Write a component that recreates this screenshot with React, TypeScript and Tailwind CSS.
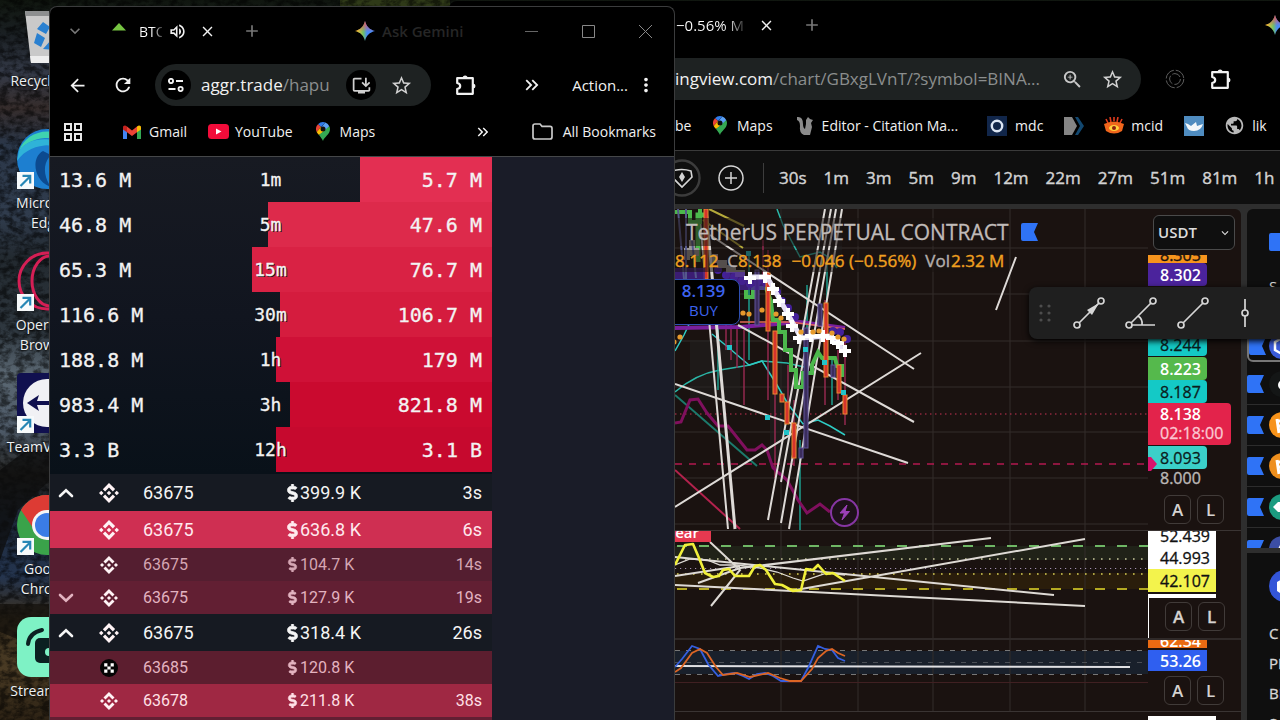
import React from "react";
import {
  MdArrowBack,
  MdRefresh,
  MdStarBorder,
  MdClose,
  MdAdd,
  MdOutlineVolumeUp,
  MdKeyboardArrowDown,
  MdOutlineInstallDesktop,
  MdMoreVert,
  MdZoomIn,
  MdKeyboardDoubleArrowRight,
  MdPublic,
} from "react-icons/md";
import { SiBinance } from "react-icons/si";
import { FaDollarSign } from "react-icons/fa";

/* ---------- small drawings ---------- */

const Spark = ({ id }: { id: string }) => (
  <svg viewBox="0 0 20 20" className="h-5 w-5 shrink-0">
    <defs>
      <linearGradient id={id + "h"} x1="0" y1="0" x2="1" y2="0">
        <stop offset="0.1" stopColor="#f5c532" />
        <stop offset="0.42" stopColor="#6fbf6a" />
        <stop offset="0.6" stopColor="#4a8cf7" />
        <stop offset="1" stopColor="#4a8cf7" />
      </linearGradient>
      <linearGradient id={id + "v"} x1="0" y1="0" x2="0" y2="1">
        <stop offset="0" stopColor="#ee4d5d" />
        <stop offset="0.55" stopColor="#ee4d5d" stopOpacity="0" />
      </linearGradient>
    </defs>
    <path d="M10 0C11.4 5.4 14.6 8.6 20 10C14.6 11.4 11.4 14.6 10 20C8.6 14.6 5.4 11.4 0 10C5.4 8.6 8.6 5.4 10 0Z" fill={`url(#${id}h)`} />
    <path d="M10 0C11.4 5.4 14.6 8.6 20 10C14.6 11.4 11.4 14.6 10 20C8.6 14.6 5.4 11.4 0 10C5.4 8.6 8.6 5.4 10 0Z" fill={`url(#${id}v)`} />
  </svg>
);

const Puzzle = () => (
  <svg viewBox="0 0 22 22" className="h-[22px] w-[22px]" fill="none" stroke="#f1f1f1" strokeWidth="2.2" strokeLinejoin="round">
    <path d="M2.2 4.2H17.8V19.8H2.2V15C4.4 14.6 5.2 13.4 5.2 12C5.2 10.6 4.4 9.4 2.2 9Z" />
    <path d="M7.6 4.2a2.5 2.6 0 0 1 5 0ZM17.8 9.4a2.6 2.5 0 0 1 0 5Z" fill="#f1f1f1" stroke="none" />
  </svg>
);

const Pin = () => (
  <svg viewBox="0 0 14 19" className="h-[19px] w-[14px] shrink-0">
    <path d="M7 0A7 7 0 0 0 2 2.2L5 5L9.5 .6A7 7 0 0 0 7 0Z" fill="#2f7bea" />
    <path d="M2 2.2A7 7 0 0 0 .7 10L5 5Z" fill="#ea4335" />
    <path d="M9.5 .6L5 5.5L9 9L13.3 4.2A7 7 0 0 0 9.5 .6Z" fill="#5aa0f5" />
    <path d="M.7 10C1.2 11 2 12 3 13L9 9L5 5Z" fill="#fbbc04" />
    <path d="M13.3 4.2L3 13C5 15.4 6 17 7 19C8 15 14 12.5 14 7A7 7 0 0 0 13.3 4.2Z" fill="#34a853" />
    <circle cx="7" cy="7" r="2.5" fill="#101010" />
  </svg>
);

const Gmail = () => (
  <svg viewBox="0 0 18 14" className="h-[14px] w-[18px] shrink-0">
    <path d="M0 3V14H4V5.5Z" fill="#4285f4" />
    <path d="M18 3V14H14V5.5Z" fill="#34a853" />
    <path d="M4 1.6V7.2L9 11L14 7.2V1.6L9 5.4Z" fill="#ea4335" />
    <path d="M0 2.4C0 .3 2.2-.2 4 1.4V7.2L0 4.4Z" fill="#c5221f" />
    <path d="M18 2.4C18 .3 15.8-.2 14 1.4V7.2L18 4.4Z" fill="#fbbc04" />
  </svg>
);

const Flag = () => (
  <svg viewBox="0 0 17 18" className="h-[18px] w-[17px] shrink-0">
    <path d="M0 2Q0 0 2 0H17L13 9L17 18H2Q0 18 0 16Z" fill="#2f73f6" />
  </svg>
);

const Shortcut = () => (
  <svg viewBox="0 0 17 17" className="absolute bottom-0 left-0 h-[17px] w-[17px]">
    <rect width="17" height="17" fill="#f7fafb" />
    <path d="M3.5 14L12.5 5M5.5 3.8H13.2V11.5" fill="none" stroke="#2686b5" strokeWidth="2.2" />
  </svg>
);

/* ---------- desktop ---------- */

const desktopIcons: { label: string; art: React.ReactNode; shortcut?: boolean }[] = [
  {
    label: "Recycle Bin",
    art: (
      <>
        <path d="M8 4H54L49 56H14Z" fill="#c9c9c9" />
        <path d="M8 4H54L52 9H9Z" fill="#8d8f90" />
        <path d="M13 49H50L49 56H14Z" fill="#ededed" />
        <path d="M20 22L26 15L33 20L29 27ZM17 36L20 26L28 31L24 40ZM26 42L34 33L40 43Z" fill="#2a80d0" />
      </>
    ),
  },
  {
    label: "Microsoft Edge",
    shortcut: true,
    art: (
      <>
        <circle cx="30" cy="30" r="30" fill="#1d7fd0" />
        <path d="M2 22C8 2 38-6 54 14C40 6 14 6 2 22Z" fill="#3fd3b0" />
        <path d="M2 22C12 6 40 8 52 18C36 14 12 14 0 32Z" fill="#2fb3d8" />
        <path d="M26 22C14 28 16 52 34 58C28 50 24 36 34 26Z" fill="#0c4a90" />
      </>
    ),
  },
  {
    label: "Opera GX Browser",
    shortcut: true,
    art: (
      <g fill="none" stroke="#d51f55" strokeWidth="3">
        <circle cx="30" cy="30" r="28" />
        <ellipse cx="33" cy="30" rx="18" ry="25" />
      </g>
    ),
  },
  {
    label: "TeamViewer",
    shortcut: true,
    art: (
      <>
        <rect width="60" height="60" rx="4" fill="#10104f" />
        <circle cx="30" cy="30" r="24" fill="#f1f1f4" />
        <path d="M10 30L22 22L20 28H40V32H20L22 38Z" fill="#10104f" />
      </>
    ),
  },
  {
    label: "Google Chrome",
    shortcut: true,
    art: (
      <>
        <circle cx="30" cy="30" r="30" fill="#3aa34a" />
        <path d="M4 15A30 30 0 0 1 56 15H30L18 36Z" fill="#dd3b34" />
        <circle cx="30" cy="30" r="15" fill="#f5f5f5" />
        <circle cx="30" cy="30" r="12" fill="#3a7ce6" />
      </>
    ),
  },
  {
    label: "Streamlabs",
    art: (
      <>
        <rect width="60" height="60" rx="14" fill="#7ef2c5" />
        <rect x="18" y="21" width="34" height="25" rx="5" fill="#0b2021" />
        <path d="M11 27Q12 16 25 13" fill="none" stroke="#0b2021" strokeWidth="4" strokeLinecap="round" />
        <circle cx="32" cy="35" r="4" fill="#7ef2c5" />
      </>
    ),
  },
];

const Wallpaper = () => (
  <svg viewBox="0 0 1280 720" preserveAspectRatio="xMinYMin slice" className="absolute inset-0 h-full w-full">
    <defs>
      <linearGradient id="rock" x1="0" y1="0" x2="0" y2="1">
        <stop offset="0" stopColor="#10160f" />
        <stop offset="0.05" stopColor="#1b2024" />
        <stop offset="0.1" stopColor="#343a48" />
        <stop offset="0.15" stopColor="#352c2b" />
        <stop offset="0.2" stopColor="#2b3749" />
        <stop offset="0.3" stopColor="#303c4d" />
        <stop offset="0.36" stopColor="#22292f" />
        <stop offset="0.46" stopColor="#2f3840" />
        <stop offset="0.52" stopColor="#5b6873" />
        <stop offset="0.6" stopColor="#4c5866" />
        <stop offset="0.66" stopColor="#23221f" />
        <stop offset="0.72" stopColor="#1e2a3c" />
        <stop offset="0.8" stopColor="#24344e" />
        <stop offset="0.86" stopColor="#3a2f1e" />
        <stop offset="0.93" stopColor="#4a3b24" />
        <stop offset="1" stopColor="#2c2214" />
      </linearGradient>
      <filter id="grain" x="0" y="0" width="1" height="1">
        <feTurbulence type="fractalNoise" baseFrequency="0.12 0.18" numOctaves="4" seed="7" />
        <feColorMatrix values="0 0 0 0 0  0 0 0 0 0  0 0 0 0 0  0 3 0 0 -1.1" />
      </filter>
    </defs>
    <rect width="1280" height="720" fill="url(#rock)" />
    <path d="M340 0H450V8H340Z" fill="#2f3a18" />
    <rect width="460" height="720" filter="url(#grain)" opacity="0.55" />
    <path d="M0 470L24 452L50 448V480L18 510L0 560Z" fill="#0e0e0e" opacity="0.75" />
    <path d="M0 604H50V618L20 640L0 632Z" fill="#12100c" opacity="0.7" />
  </svg>
);

/* ---------- order flow window ---------- */

const ratios = [
  { buy: "13.6 M", span: "1m", sell: "5.7 M", pct: 29.9, color: "#e32f52" },
  { buy: "46.8 M", span: "5m", sell: "47.6 M", pct: 50.7, color: "#dd2a4b" },
  { buy: "65.3 M", span: "15m", sell: "76.7 M", pct: 54.3, color: "#d92244" },
  { buy: "116.6 M", span: "30m", sell: "106.7 M", pct: 48, color: "#d51c3e" },
  { buy: "188.8 M", span: "1h", sell: "179 M", pct: 48.9, color: "#cf1137" },
  { buy: "983.4 M", span: "3h", sell: "821.8 M", pct: 45.7, color: "#ca0a2f" },
  { buy: "3.3 B", span: "12h", sell: "3.1 B", pct: 48.9, color: "#c6092e" },
];

const big = "h-[37px] text-[18px]";
const small = "h-[33px] text-[16px]";
const trades = [
  { c: "up", ex: "b", price: "63675", amt: "399.9 K", age: "3s", row: `${big} bg-[#161a22] text-[#f5f5f5]`, lg: true },
  { c: "", ex: "b", price: "63675", amt: "636.8 K", age: "6s", row: `${big} bg-[#cf2f52] text-[#ffe9ee]`, lg: true },
  { c: "", ex: "b", price: "63675", amt: "104.7 K", age: "14s", row: `${small} bg-[#541e30] text-[#d5a6b3]`, lg: false },
  { c: "down", ex: "b", price: "63675", amt: "127.9 K", age: "19s", row: `${small} bg-[#621f33] text-[#e2b3c0]`, lg: false },
  { c: "up", ex: "b", price: "63675", amt: "318.4 K", age: "26s", row: `${big} bg-[#161a22] text-[#f5f5f5]`, lg: true },
  { c: "", ex: "o", price: "63685", amt: "120.8 K", age: "", row: `${small} bg-[#5c1e2f] text-[#e4b3c0]`, lg: false },
  { c: "", ex: "b", price: "63678", amt: "211.8 K", age: "38s", row: `${small} bg-[#9f2843] text-[#ffe0e7]`, lg: false },
];

const Okx = () => (
  <svg viewBox="0 0 18 18" className="h-[18px] w-[18px]">
    <circle cx="9" cy="9" r="9" fill="#050505" />
    <path d="M4.2 4.2h3.2v3.2H4.2zM10.6 4.2h3.2v3.2h-3.2zM7.4 7.4h3.2v3.2H7.4zM4.2 10.6h3.2v3.2H4.2zM10.6 10.6h3.2v3.2h-3.2z" fill="#fff" />
  </svg>
);

const Caret = ({ d }: { d: string }) => (
  <svg viewBox="0 0 16 10" className="h-[10px] w-4" fill="none" stroke="currentColor" strokeWidth="2.6" strokeLinecap="round">
    <path d={d} />
  </svg>
);

const FlowWindow = () => (
  <section className="absolute bottom-0 left-[49px] top-[6px] flex w-[626px] flex-col overflow-hidden rounded-t-lg border border-b-0 border-[#3b3c3d] bg-black text-[15px] text-[#f1f1f1]">
    <header className="flex h-[50px] shrink-0 items-center pb-[2px] pl-[15px]">
      <button aria-label="Search tabs" className="text-[#777]"><MdKeyboardArrowDown size={20} /></button>
      <svg viewBox="0 0 14 8" className="-mt-2 ml-[27px] h-2 w-[14px]"><path d="M7 0L14 7.5H0Z" fill="#76c442" /></svg>
      <span className="ml-[13px] w-[23px] overflow-hidden bg-gradient-to-r from-white from-60% to-[#444] bg-clip-text text-[14px] text-transparent">BTC</span>
      <button aria-label="Mute tab" className="ml-[6px]"><MdOutlineVolumeUp size={19} /></button>
      <button aria-label="Close tab" className="ml-3"><MdClose size={17} /></button>
      <button aria-label="New tab" className="ml-[26px] text-[#777]"><MdAdd size={20} /></button>
      <button className="ml-[93px] flex items-center gap-[7px] text-[15px] font-semibold text-[#262626]">
        <Spark id="s1" />Ask Gemini
      </button>
      <div className="ml-auto mr-[22px] flex items-center gap-[44px]">
        <button aria-label="Minimize"><svg viewBox="0 0 13 13" className="h-[13px] w-[13px]"><path d="M0 6.5H13" stroke="#666" /></svg></button>
        <button aria-label="Maximize"><svg viewBox="0 0 13 13" className="h-[13px] w-[13px]"><path d="M.5.5H12.5V12.5H.5Z" fill="none" stroke="#888" /></svg></button>
        <button aria-label="Close"><svg viewBox="0 0 13 13" className="h-[13px] w-[13px]"><path d="M0 0L13 13M13 0L0 13" stroke="#888" /></svg></button>
      </div>
    </header>
    <div className="flex h-[56px] shrink-0 items-center pl-[17px]">
      <button aria-label="Back"><MdArrowBack size={21} /></button>
      <button aria-label="Reload" className="ml-6"><MdRefresh size={22} /></button>
      <div className="ml-[21px] flex h-[42px] w-[276px] items-center rounded-full bg-[#1e2222] pl-[6px]">
        <span className="grid h-[30px] w-[30px] place-items-center rounded-full bg-black">
          <svg viewBox="0 0 16 14" className="h-[14px] w-4" fill="none" stroke="#f1f1f1" strokeWidth="1.9">
            <circle cx="3" cy="3" r="2.1" /><path d="M8 3H15" /><circle cx="12.6" cy="11" r="2.1" /><path d="M.5 11H7.5" />
          </svg>
        </span>
        <span className="ml-[10px] w-[145px] text-[17px]">aggr.trade<span className="text-[#8b8e8e]">/hapu</span></span>
        <button aria-label="Install" className="grid h-[30px] w-[30px] place-items-center rounded-full bg-black text-[#cfcfcf]"><MdOutlineInstallDesktop size={21} /></button>
        <button aria-label="Bookmark" className="ml-[14px] text-[#d0d0d0]"><MdStarBorder size={23} /></button>
      </div>
      <button aria-label="Extensions" className="ml-[24px]"><Puzzle /></button>
      <button aria-label="More" className="ml-[44px]"><MdKeyboardDoubleArrowRight size={22} /></button>
      <span className="ml-auto">Action...</span>
      <button aria-label="Menu" className="ml-[7px] mr-[17px]"><MdMoreVert size={22} /></button>
    </div>
    <nav className="flex h-[43px] shrink-0 items-center pb-[6px] pl-[14px] text-[14px]">
      <svg viewBox="0 0 18 18" className="h-[18px] w-[18px]" fill="none" stroke="#e8e8e8" strokeWidth="2">
        <path d="M1 1h6v6H1zM11 1h6v6h-6zM1 11h6v6H1zM11 11h6v6h-6z" />
      </svg>
      <a href="#gmail" className="ml-[41px] flex items-center gap-2"><Gmail />Gmail</a>
      <a href="#youtube" className="ml-[21px] flex items-center gap-[6px]">
        <svg viewBox="0 0 21 15" className="h-[15px] w-[21px]"><rect width="21" height="15" rx="3.5" fill="#f20c3a" /><path d="M8 4.5L13.5 7.5L8 10.5Z" fill="#fff" /></svg>YouTube
      </a>
      <a href="#maps" className="ml-[23px] flex items-center gap-[10px]"><Pin />Maps</a>
      <button aria-label="More bookmarks" className="ml-auto mr-[40px]"><MdKeyboardDoubleArrowRight size={18} /></button>
      <a href="#all" className="mr-[18px] flex items-center gap-[10px]">
        <svg viewBox="0 0 21 17" className="h-[17px] w-[21px]"><path d="M1 3Q1 1 3 1H8L10 3.4H18Q20 3.4 20 5.4V14Q20 16 18 16H3Q1 16 1 14Z" fill="none" stroke="#c9c9c9" strokeWidth="1.7" /></svg>
        All Bookmarks
      </a>
    </nav>
    <div className="flex-1 overflow-hidden border-t border-[#454749] bg-[#1a1c28]">
      <div className="w-[442px]">
        <div className="bg-gradient-to-b from-[#171a22] via-[#11151f] to-[#091119] pb-[2px] font-['DejaVu_Sans_Mono',monospace] text-[20px] text-[#f3f3f3] [-webkit-text-stroke:0.3px]">
          {ratios.map((r) => (
            <div key={r.span} className="relative flex h-[45px] items-center">
              <div className="absolute inset-y-0 right-0" style={{ width: `${r.pct}%`, backgroundColor: r.color }} />
              <span className="relative flex-1 pl-[9px]">{r.buy}</span>
              <span className="relative text-[18px] [text-shadow:1px_1px_0_#111]">{r.span}</span>
              <span className="relative flex-1 pr-[10px] text-right">{r.sell}</span>
            </div>
          ))}
        </div>
        <table className="w-full table-fixed border-collapse font-['Roboto',sans-serif]">
          <colgroup><col className="w-[40px]" /><col className="w-[53px]" /><col className="w-[143px]" /><col /><col className="w-[70px]" /></colgroup>
          <tbody>
            {trades.map((t, i) => (
              <tr key={i} className={t.row}>
                <td className="p-0 pl-2">
                  {t.c === "up" && <Caret d="M2 8L8 2.4L14 8" />}
                  {t.c === "down" && <Caret d="M2 2L8 7.6L14 2" />}
                </td>
                <td className="p-0">
                  <div className="grid w-[37px] place-items-center text-[#fff3f5]">
                    {t.ex === "o" ? <Okx /> : <SiBinance size={t.lg ? 20 : 18} />}
                  </div>
                </td>
                <td className="p-0">{t.price}</td>
                <td className="p-0">
                  <span className="flex items-center gap-px"><FaDollarSign size={t.lg ? 18 : 15} className="w-[13px]" strokeWidth={20} stroke="currentColor" />{t.amt}</span>
                </td>
                <td className="p-0 pr-[10px] text-right">{t.age}</td>
              </tr>
            ))}
          </tbody>
        </table>
        <div className="h-10 bg-[#621f33]" />
      </div>
    </div>
  </section>
);

/* ---------- chart window ---------- */

const intervals = ["30s", "1m", "3m", "5m", "9m", "12m", "22m", "27m", "51m", "81m", "1h"];

const gridX = [781, 858, 933, 1010, 1085];

/* candles: x, top, height, rising */
const candles: [number, number, number, boolean][] = [
  [704, 209, 70, false],
  [766, 273, 58, false],
  [773, 331, 63, false],
  [780, 394, 8, false],
  [785, 402, 22, false],
  [792, 423, 35, false],
  [824, 303, 74, false],
  [837, 365, 28, false],
  [843, 395, 19, false],
  [755, 270, 55, true],
  [818, 304, 22, true],
  [804, 328, 120, true],
  [831, 365, 12, true],
  [799, 448, 10, true],
];

const orangeDots = [[674, 342], [680, 337], [743, 313], [749, 314], [762, 310], [776, 314], [781, 318], [801, 332], [813, 332], [819, 331], [832, 333], [838, 337], [844, 339]];
const purpleDots = [[718, 270], [726, 275], [734, 277], [742, 281], [750, 284], [758, 281], [766, 283], [777, 292], [782, 301], [788, 308], [795, 317], [833, 331], [840, 332], [847, 339]];
const crosses = [[750, 278], [765, 277], [773, 289], [779, 301], [788, 314], [792, 326], [799, 338], [811, 336], [823, 336], [832, 338], [838, 343], [845, 351]];

const PricePane = () => (
  <svg viewBox="675 209 473 321" preserveAspectRatio="xMinYMin slice" className="h-full w-full">
    <g stroke="#332c2b">
      {gridX.map((x) => <path key={x} d={`M${x} 209V530`} />)}
      {[248, 294, 341, 387, 432, 478, 524].map((y) => <path key={y} d={`M675 ${y}H1148`} />)}
    </g>
    <path d="M780 209h62v50h-62zM770 300h30v160h-30zM690 340h50v60h-50z" fill="#222" opacity="0.5" />
    <path d="M675 414H1148" stroke="#c73352" strokeDasharray="1.5 3.5" />
    <path d="M675 464H1148" stroke="#b3184f" strokeWidth="1.4" strokeDasharray="7 7" />
    <g fill="none" stroke="#2bb7a8" strokeWidth="1.5">
      <path d="M777 209L783 225L800 257L820 252L830 258L837 268" />
      <path d="M675 392Q696 374 720 370L750 365L762 361L787 363L804 367" />
      <path d="M675 351L684 335L692 318M712 334L729 348L749 365L762 361L777 385L788 404L803 424L818 420L830 426L845 435" stroke="#2ecbc4" />
      <path d="M675 395L757 466" strokeWidth="2" stroke="#1c7a6c" />
      <path d="M749 255V360M807 285V420M832 360V405M800 440V530M718 320V390M827 260V300" stroke="#1d9d8d" />
    </g>
    <path d="M675 470L740 529" stroke="#b3224d" strokeWidth="2" />
    <g stroke="#a52b58" strokeWidth="1.3">
      <path d="M744 330V405M737 325V368M731 325V360M775 390V478M768 250V400M788 365V420M763 240V275M825 300V405M838 350V400M845 340V425M794 400V466M726 320V350" />
    </g>
    <path d="M675 423L681 422L690 400L698 399L707 413L718 426H728L747 450H755L762 445L767 450L773 468L787 480L798 500L807 513L820 504L830 512" fill="none" stroke="#80105e" strokeWidth="3" />
    <path d="M675 328L740 327L800 322L845 328" fill="none" stroke="#7a1f9c" strokeWidth="4" />
    <path d="M740 322H790L845 329" fill="none" stroke="#e06a55" strokeWidth="1.4" />
    <g stroke="#dedad7" strokeWidth="2" fill="none">
      <path d="M825 209L768 520M831 209L781 482M836 209L781 523M842 209L789 529" />
      <path d="M699 209L728 529" /><path d="M706 209L735 529" strokeWidth="3" />
      <path d="M675 384L908 463M675 507L921 353M710 235L760 268L914 369M738 325L914 422M1016 257L996 310" />
    </g>
    <path d="M709 209L744 226M703 220L743 248" stroke="#b5a93a" strokeWidth="2" />
    <g fill="none" stroke="#4cb84c" strokeWidth="4">
      <path d="M675 212H690V222H700V209M746 290V297H753V288H766L771 301L773 320H779V332H785V350H791V370H796V387H803V373H812V365L818 352L822 358H835L837 366H842V377" />
      <path d="M698 262V215H708" strokeWidth="5" />
    </g>
    <g fill="#43209a">{purpleDots.map(([x, y]) => <circle key={x} cx={x} cy={y} r="4" />)}</g>
    {candles.map(([x, y, h, up]) => (
      <rect key={x} x={x} y={y} width="4" height={h} fill={up ? "#3b2d5c" : "#d5342d"} stroke={up ? "#61549a" : "#e98a2f"} strokeWidth="1" />
    ))}
    <path d="M684 248h5v-8h6v8h4v8h-9v4h-6zM712 254h6v6h9v5h9v5h9v7h-10v-4h-9v-5h-9v-5h-5z" fill="#9c9896" />
    <path d="M675 268h30v12h20v-8h20v8h20v10H675z" fill="#43218c" opacity="0.8" />
    <path d="M678 209l6 70M686 209v70M692 240l4 38" stroke="#55588c" strokeWidth="2" />
    <path d="M748 277H767L774 289L801 338L830 336L845 351" fill="none" stroke="#e8e3f6" strokeWidth="5" />
    <g stroke="#fff" strokeWidth="4">
      {crosses.map(([x, y]) => <path key={x} d={`M${x - 6} ${y}h12M${x} ${y - 6}v12`} />)}
    </g>
    <g fill="#e79a2c">{orangeDots.map(([x, y]) => <circle key={x} cx={x} cy={y} r="2.6" />)}</g>
    <g fill="#22c3c9">
      {[[727, 345], [803, 347], [841, 390], [784, 430], [765, 415], [822, 360], [746, 251]].map(([x, y]) => <rect key={x} x={x} y={y} width="5" height="5" />)}
    </g>
    <circle cx="844.5" cy="512.5" r="13.5" fill="#1d1119" stroke="#8636a3" strokeWidth="2" />
    <path d="M847 505L840 513H844.5L842 520L849.5 511.5H845Z" fill="#9b40b8" stroke="#9b40b8" strokeLinejoin="round" />
  </svg>
);

const RsiPane = () => (
  <svg viewBox="675 531 473 107" preserveAspectRatio="xMinYMin slice" className="h-full w-full">
    <rect x="675" y="546" width="473" height="14" fill="#202218" />
    <rect x="675" y="573" width="473" height="16" fill="#2a1d0b" />
    <g stroke="#332c2b">{gridX.map((x) => <path key={x} d={`M${x} 531V638`} />)}</g>
    <path d="M677 546H1148" stroke="#6fb765" strokeWidth="2" strokeDasharray="10 12" />
    <path d="M677 559H1148" stroke="#c8c79a" strokeWidth="1.5" strokeDasharray="1.6 6.4" />
    <path d="M675 568.5H1148" stroke="#a08fb0" strokeDasharray="1.2 3.8" />
    <path d="M677 574H1148" stroke="#d8cf55" strokeWidth="1.6" strokeDasharray="1.6 6.4" />
    <path d="M677 589H1148" stroke="#b5aa22" strokeWidth="2" strokeDasharray="10 12" />
    <g stroke="#dedad5" strokeWidth="2" fill="none">
      <path d="M710 542L740 570L711 606M698 583L740 568L991 538M675 576L740 566M790 591L1085 539M675 557L1054 595M675 585L1085 606" />
      <path d="M675 565L690 559L707 560L720 565H737L760 568L777 572L793 578L803 581L827 573L845 575" strokeWidth="1.3" />
    </g>
    <path d="M675 565L685 545L693 544L699 558L705 573L713 577L719 576L723 570L729 569L735 576H749L755 566L760 565L766 570L775 584L782 585L793 591L801 590L806 569L813 570L818 565L826 574L833 573L845 581" fill="none" stroke="#f0ef3a" strokeWidth="2.6" strokeLinejoin="round" />
  </svg>
);

const StochPane = () => (
  <svg viewBox="675 639 473 71" preserveAspectRatio="xMinYMin slice" className="h-full w-full">
    <rect x="675" y="650" width="473" height="23" fill="#19202b" />
    <g stroke="#332c2b">{gridX.map((x) => <path key={x} d={`M${x} 639V711`} />)}</g>
    <path d="M675 649.5H1148M675 673.5H1148" stroke="#777" strokeDasharray="5 6" />
    <path d="M675 661.5H1148" stroke="#4a4e55" strokeDasharray="5 6" />
    <path d="M675 681.5H1148" stroke="#402022" />
    <path d="M675 665L1130 666" stroke="#dfdfe2" strokeWidth="2" />
    <path d="M675 666L682 658L692 645L700 648L708 663L718 675L727 673L735 672L743 675L749 678L757 673L765 672L773 675L781 680H801L808 667L818 645L825 648L832 649L838 657L845 660" fill="none" stroke="#355fe0" strokeWidth="1.8" />
    <path d="M675 671L681 667L692 652L700 648L707 652L716 666L723 674L737 672L750 676L768 672L780 677L790 680H801L812 668L818 657L826 650L832 648L838 652L845 655" fill="none" stroke="#dc6524" strokeWidth="1.8" />
  </svg>
);

const ScaleButtons = () => (
  <div className="flex gap-[6px] pl-4">
    {["A", "L"].map((s) => (
      <button key={s} className="grid h-[29px] w-[27px] place-items-center rounded-md border border-[#413b39] text-[17px] font-semibold text-[#d5d2d0]">{s}</button>
    ))}
  </div>
);

const tag = "flex shrink-0 items-center rounded-r-sm pl-3 text-[16px] leading-none";

const PriceAxis = () => (
  <div className="flex w-[93px] shrink-0 flex-col">
    <div className="relative ml-[5px] mt-[6px] h-[35px] w-[82px] shrink-0">
      <select aria-label="Currency" className="h-full w-full appearance-none rounded-md border border-[#4a4a4a] bg-[#0f0f0f] pl-1 text-[15px] font-semibold text-[#dcdcdc]">
        <option>USDT</option>
      </select>
      <MdKeyboardArrowDown size={14} className="pointer-events-none absolute right-[3px] top-[11px] text-[#ddd]" />
    </div>
    <div className="mt-[5px] flex h-[8px] w-[59px] shrink-0 items-end overflow-hidden bg-[#f7941d] pl-3 text-[16px] leading-[16px] text-[#1b1210] [-webkit-text-stroke:0.4px]">8.305</div>
    <div className={`${tag} mb-[47px] h-[23px] w-[59px] bg-[#4b239c] font-semibold text-white`}>8.302</div>
    <div className={`${tag} h-[23px] w-[59px] bg-[#14c9c6] text-[#0b1c1c] [-webkit-text-stroke:0.3px]`}>8.244</div>
    <div className={`${tag} mt-px h-[23px] w-[59px] bg-[#55b94c] font-semibold text-white`}>8.223</div>
    <div className={`${tag} h-[23px] w-[59px] bg-[#14c9c6] text-[#0b1c1c] [-webkit-text-stroke:0.3px]`}>8.187</div>
    <div className="flex h-[42px] w-[83px] shrink-0 flex-col justify-center rounded-r-sm bg-[#e3234b] pl-3 text-[16px] leading-[19px]">
      <span className="font-semibold text-white">8.138</span>
      <span className="text-[#fbc9d3] [-webkit-text-stroke:0.3px]">02:18:00</span>
    </div>
    <div className={`${tag} relative mt-px h-[23px] w-[59px] bg-[#3bd0c9] text-[#0b1c1c] [-webkit-text-stroke:0.3px]`}>
      8.093
      <svg viewBox="0 0 9 14" className="absolute left-0 top-[11px] h-[14px] w-[9px]"><path d="M0 0H3L9 7L3 14H0Z" fill="#d9126c" /></svg>
    </div>
    <div className="mb-2 shrink-0 pl-3 text-[16px] leading-[18px] text-[#bbb7b5] [-webkit-text-stroke:0.4px]">8.000</div>
    <ScaleButtons />
  </div>
);

const coins = [
  { color: "#141616", glyph: <circle cx="14" cy="14" r="5" fill="#fff" /> },
  { color: "#f7931a", glyph: <path d="M8 7l2 14M7 9h8M8 14h8" stroke="#fff" strokeWidth="3" /> },
  { color: "#ee8f1d", glyph: <path d="M8 7l2 14M7 9h8M8 14h8" stroke="#fff" strokeWidth="3" /> },
  { color: "#1b9c80", glyph: <path d="M4 13l5-5h10v10H9z" fill="#fff" /> },
];

const Watchlist = () => (
  <aside className="flex w-[33px] shrink-0 flex-col gap-[5px] overflow-hidden text-[16px] text-[#d6d6d6]">
    <div className="h-[339px] shrink-0 overflow-hidden rounded-tl-md bg-[#0f0f0f]">
      <div className="flex h-[66px] items-center pl-[22px]"><Flag /></div>
      <div className="h-[54px] pl-[22px] text-[15px]">S</div>
      <div className="mb-[2px] flex h-[33px] w-[60px] items-center gap-[3px] rounded-md border-2 border-[#777]">
        <Flag /><svg viewBox="0 0 26 26" className="h-[26px] w-[26px]"><circle cx="13" cy="13" r="13" fill="#3b5bd8" /><path d="M13 5l7 4v8l-7 4l-7-4V9z" fill="none" stroke="#fff" strokeWidth="2.5" /></svg>
      </div>
      {coins.map((c, i) => (
        <div key={i} className="flex h-[41px] w-[60px] items-center gap-[5px] border-b border-[#2c2c2c]">
          <Flag /><svg viewBox="0 0 26 26" className="h-[26px] w-[26px]"><circle cx="13" cy="13" r="13" fill={c.color} />{c.glyph}</svg>
        </div>
      ))}
      <div className="flex h-[41px] w-[60px] items-center gap-[5px]">
        <Flag /><svg viewBox="0 0 26 26" className="h-[26px] w-[26px]"><circle cx="13" cy="13" r="13" fill="#3c4ea5" /><path d="M13 5l6 12H7z" fill="#fff" /></svg>
      </div>
    </div>
    <div className="flex-1 bg-[#0f0f0f] pl-[22px] pt-[17px] text-[15px] leading-[30px] [-webkit-text-stroke:0.3px]">
      <svg viewBox="0 0 32 32" className="mb-4 h-8 w-8"><circle cx="16" cy="16" r="16" fill="#3355d8" /><path d="M16 7l8 5v9l-8 5l-8-5v-9z" fill="#fff" /></svg>
      <div>C</div><div>PI</div><div>BI</div><div>S</div>
    </div>
  </aside>
);

const DrawBar = () => (
  <div className="absolute -right-8 top-[286px] flex h-[52px] w-[283px] items-center rounded-lg bg-[#1f1f1f] pl-[10px] shadow-[0_2px_6px_#000]">
    <svg viewBox="0 0 12 18" className="h-[18px] w-3" fill="#4d4d4d">
      {[2, 9, 16].map((y) => <g key={y}><circle cx="2" cy={y} r="1.6" /><circle cx="10" cy={y} r="1.6" /></g>)}
    </svg>
    <div className="ml-[22px] flex items-center gap-5 text-[#d6d6d6]">
      <button aria-label="Arrow"><svg viewBox="0 0 32 32" className="h-8 w-8" fill="none" stroke="currentColor" strokeWidth="1.7"><circle cx="4" cy="28" r="3" /><circle cx="28" cy="4" r="3" /><path d="M6 26L26 6" /><path d="M14 13L26 6L19 18Z" fill="currentColor" stroke="none" /></svg></button>
      <button aria-label="Trend angle"><svg viewBox="0 0 32 32" className="h-8 w-8" fill="none" stroke="currentColor" strokeWidth="1.7"><circle cx="4" cy="28" r="3" /><circle cx="28" cy="4" r="3" /><path d="M6 26L26 6M7 28H30M13 19Q18 22 17 28" /></svg></button>
      <button aria-label="Trend line"><svg viewBox="0 0 32 32" className="h-8 w-8" fill="none" stroke="currentColor" strokeWidth="1.7"><circle cx="4" cy="28" r="3" /><circle cx="28" cy="4" r="3" /><path d="M6 26L26 6" /></svg></button>
      <button aria-label="Vertical line"><svg viewBox="0 0 32 32" className="h-8 w-8" fill="none" stroke="currentColor" strokeWidth="1.7"><circle cx="16" cy="16" r="3" /><path d="M16 2V13M16 19V30" /></svg></button>
    </div>
  </div>
);

const ChartWindow = () => (
  <section className="absolute bottom-0 left-[449px] right-0 top-px flex flex-col overflow-hidden rounded-tl-lg bg-black pl-[226px] text-[15px] text-[#f1f1f1]">
    <header className="flex h-[50px] shrink-0 items-center pb-[2px]">
      <span className="ml-px bg-gradient-to-r from-white from-75% to-[#333] bg-clip-text text-transparent">−0.56% M</span>
      <button aria-label="Close tab" className="ml-[14px]"><MdClose size={17} /></button>
      <button aria-label="New tab" className="ml-[27px] text-[#777]"><MdAdd size={20} /></button>
      <span className="-mr-[5px] ml-auto"><Spark id="s2" /></span>
    </header>
    <div className="flex h-[56px] shrink-0 items-center">
      <div className="flex h-[42px] flex-1 items-center rounded-r-full bg-[#1e2222] pr-[17px] text-[17px]">
        <span className="flex-1 whitespace-nowrap">ingview.com<span className="text-[#8b8e8e]">/chart/GBxgLVnT/?symbol=BINA...</span></span>
        <button aria-label="Zoom" className="text-[#c8c8c8]"><MdZoomIn size={23} /></button>
        <button aria-label="Bookmark" className="ml-[17px] text-[#d0d0d0]"><MdStarBorder size={23} /></button>
      </div>
      <svg viewBox="0 0 20 20" className="ml-[24px] h-5 w-5" fill="none" stroke="#5c5c5c">
        <circle cx="10" cy="10" r="8.8" strokeDasharray="12 2" /><circle cx="10" cy="10" r="5.4" strokeDasharray="9 2" />
      </svg>
      <button aria-label="Extensions" className="ml-[25px] mr-[48px]"><Puzzle /></button>
    </div>
    <nav className="flex h-[43px] shrink-0 items-center overflow-hidden whitespace-nowrap pb-[6px] text-[14px]">
      <a href="#yt" className="w-[15px]">be</a>
      <a href="#maps" className="ml-[23px] flex items-center gap-[10px]"><Pin />Maps</a>
      <a href="#editor" className="ml-[24px] flex items-center gap-2">
        <svg viewBox="0 0 17 20" className="h-5 w-[17px]"><path d="M0 1Q6 0 6 8Q6 12 8 13L9 8L9 4L11 1L13 3L16 4L14 7L15 11L13 19H7Q2 17 3 10Q3 5 0 4Z" fill="#8b8b8b" /></svg>
        Editor - Citation Ma...
      </a>
      <a href="#mdc" className="ml-[29px] flex items-center gap-2">
        <svg viewBox="0 0 20 20" className="h-5 w-5"><rect width="20" height="20" fill="#11264a" /><circle cx="10" cy="10" r="5.2" fill="none" stroke="#dbe5f3" strokeWidth="2.4" /></svg>mdc
      </a>
      <a href="#x" aria-label="Shortcut" className="ml-[21px]">
        <svg viewBox="0 0 20 20" className="h-5 w-5"><path d="M0 1H8L13 10L8 19H0Z" fill="#858585" /><path d="M11 1H14L20 10L14 19H11L16 10Z" fill="#12476f" /></svg>
      </a>
      <a href="#mcid" className="ml-5 flex items-center gap-[7px]">
        <svg viewBox="0 0 20 18" className="h-[18px] w-5"><path d="M2 2l2 4M6 0l1 5M10 0v4M14 0l-1 5M18 2l-2 4" stroke="#e03a1c" strokeWidth="1.6" /><path d="M0 7Q10 2 20 7L18 14Q10 19 2 14Z" fill="#f0661c" /><ellipse cx="10" cy="11" rx="5" ry="3" fill="#ffd23c" /><circle cx="10" cy="11" r="2" fill="#8c1f10" /></svg>mcid
      </a>
      <a href="#whale" aria-label="Whale" className="ml-[21px]">
        <svg viewBox="0 0 20 20" className="h-5 w-5"><rect width="20" height="20" fill="#4f8cc0" /><path d="M1 7L4 8L7 10L12 6L13 10L19 8Q17 15 10 15Q4 15 3 11Z" fill="#f2f7fa" /></svg>
      </a>
      <a href="#lik" className="ml-5 flex items-center gap-[7px]"><MdPublic size={21} className="text-[#b9b9b9]" />lik</a>
    </nav>
    <div className="flex h-[54px] shrink-0 items-center gap-[17px] overflow-hidden border-t border-[#3a3a3a] bg-[#0f0f0f] text-[17px] text-[#d3d3d3]">
      <span className="-ml-3 flex items-center">
        <svg viewBox="0 0 38 38" className="h-[38px] w-[38px]" fill="none"><circle cx="19" cy="19" r="17.5" stroke="#3c3c3c" strokeWidth="2.4" /><path d="M9 12Q19 9 28 12L29 18L19 28L9 18Z" stroke="#d6d6d6" strokeWidth="1.6" /><path d="M19 13L22 18L19 23L16 18Z" fill="#d6d6d6" /></svg>
      </span>
      <button aria-label="Compare"><svg viewBox="0 0 26 26" className="h-[26px] w-[26px]" fill="none" stroke="#d6d6d6" strokeWidth="1.5"><circle cx="13" cy="13" r="12" /><path d="M13 7V19M7 13H19" /></svg></button>
      <span className="ml-[2px] h-[30px] w-px shrink-0 bg-[#3d3d3d]" />
      <div className="-ml-[2px] flex gap-[17px] [-webkit-text-stroke:0.4px]">
        {intervals.map((t) => <button key={t}>{t}</button>)}
      </div>
    </div>
    <div className="flex min-h-0 flex-1 bg-[#2e2e2e] pt-[5px]">
      <main className="relative mr-[6px] flex min-w-0 flex-1 flex-col overflow-hidden rounded-tr-md bg-[#1a1210]">
        <div className="flex h-[321px] shrink-0">
          <div className="min-w-0 flex-1"><PricePane /></div>
          <PriceAxis />
        </div>
        <div className="flex h-[108px] shrink-0 border-t border-[#3a3433]">
          <div className="relative min-w-0 flex-1">
            <RsiPane />
            <div className="absolute left-0 top-0 flex h-[11px] w-9 items-end justify-end overflow-hidden bg-[#e53950] pr-3 text-[15px] font-semibold leading-[19px] text-white">Bear</div>
          </div>
          <div className="flex w-[93px] shrink-0 flex-col text-[16px] text-[#101010] [-webkit-text-stroke:0.3px]">
            <div className="flex h-4 w-[68px] items-end overflow-hidden bg-white pl-3 leading-[22px]">52.439</div>
            <div className="flex h-[22px] w-[68px] items-center bg-white pl-3">44.993</div>
            <div className="flex h-[23px] w-[68px] items-center bg-[#f3f34c] pl-3">42.107</div>
            <div className="mt-[2px] h-1 w-[68px] bg-white" />
            <div className="flex-1 border-l border-white pt-1"><ScaleButtons /></div>
          </div>
        </div>
        <div className="flex h-[73px] shrink-0 border-t-2 border-[#2f2928]">
          <div className="min-w-0 flex-1"><StochPane /></div>
          <div className="flex w-[93px] shrink-0 flex-col text-[16px] font-semibold text-white">
            <div className="flex h-[8px] w-[59px] shrink-0 items-end overflow-hidden bg-[#ea6a12] pl-3 leading-[14px]">62.34</div>
            <div className="mb-[5px] mt-[2px] flex h-[21px] w-[59px] shrink-0 items-center bg-[#2f5ff0] pl-3">53.26</div>
            <ScaleButtons />
          </div>
        </div>
        <div className="flex flex-1 justify-end border-t border-[#3a3433] pt-1">
          <div className="w-[93px]"><div className="h-5 w-[68px] bg-white" /></div>
        </div>
        <div className="absolute left-0 top-[9px] flex items-center text-[21px] leading-[28px] text-[#c0bbb9]">
          <h1 className="bg-[#1a1210]/55 pl-[11px] [-webkit-text-stroke:0.3px]">TetherUS PERPETUAL CONTRACT</h1>
          <span className="ml-3"><Flag /></span>
        </div>
        <div className="absolute left-0 top-[41px] flex items-center whitespace-pre bg-[#1a1210]/55 text-[17px] leading-[22px] text-[#f0a020] [-webkit-text-stroke:0.4px]">
          <span>8.112</span>
          <span className="ml-[9px] text-[#b3aeac]">C</span><span>8.138</span>
          <span className="ml-[10px]">−0.046 (−0.56%)</span>
          <span className="ml-[9px] text-[#b3aeac]">Vol</span><span className="ml-px">2.32 M</span>
        </div>
        <button className="absolute -left-2 top-[70px] flex h-[46px] w-[73px] flex-col items-center justify-center rounded-lg border border-[#2e4fb0] bg-black pb-[3px] text-[#3d63ee]">
          <span className="text-[17px] font-semibold leading-[20px]">8.139</span>
          <span className="text-[15px] leading-[19px]">BUY</span>
        </button>
      </main>
      <Watchlist />
    </div>
    <DrawBar />
  </section>
);

export default function App() {
  return (
    <div className="relative h-screen min-h-[720px] w-full overflow-hidden bg-[#1c2126] font-['Open_Sans','Noto_Sans',sans-serif]">
      <Wallpaper />
      <div className="relative w-[49px] overflow-hidden">
        <ul className="w-[94px] pt-[7px] text-[14px] leading-5 text-[#eef1f3] [text-shadow:0_1px_2px_#000]">
          {desktopIcons.map((d) => (
            <li key={d.label} className="flex h-[122px] flex-col items-center">
              <div className="relative h-[60px] w-[60px] shrink-0">
                <svg viewBox="0 0 60 60" className="h-full w-full">{d.art}</svg>
                {d.shortcut && <Shortcut />}
              </div>
              <span className="mt-1 text-center">{d.label}</span>
            </li>
          ))}
        </ul>
      </div>
      <ChartWindow />
      <FlowWindow />
    </div>
  );
}
